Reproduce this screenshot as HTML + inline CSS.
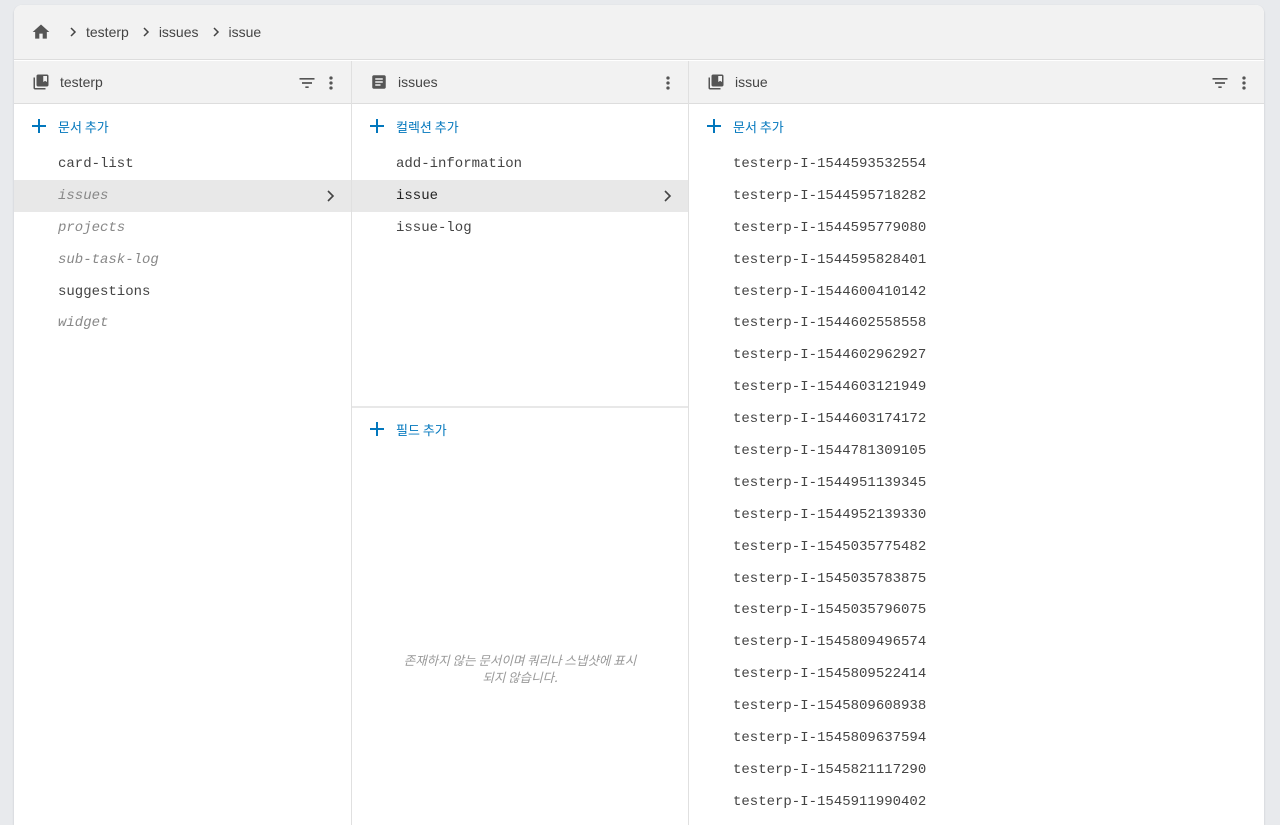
<!DOCTYPE html>
<html><head><meta charset="utf-8"><style>
*{box-sizing:border-box;margin:0;padding:0}
body{width:1280px;height:813px;background:#e8eaed;font-family:"Liberation Sans","Noto Sans CJK KR",sans-serif;overflow:hidden;position:relative}
.card{position:absolute;left:14px;top:5px;width:1250px;height:820px;background:#fff;border-radius:8px 8px 0 0;overflow:hidden;box-shadow:0 1px 2px rgba(0,0,0,.15)}
.bc{height:55px;background:#f2f2f2;border-bottom:1px solid #ddd;display:flex;align-items:center;padding-left:16px;font-size:14px;color:#444}
.bc .sep{margin:0 8px 0 12px;display:inline-block}
.col{position:absolute;top:56px;bottom:0;border-right:1px solid #e0e0e0}
.ch{height:43px;background:#f2f2f2;border-bottom:1px solid #ddd;display:flex;align-items:center;padding-left:18px;font-size:14px;color:#444;position:relative}
.ch .t{margin-left:10px}
.ic{position:absolute;top:12px}
.add{height:44px;display:flex;align-items:center;padding-left:18px;color:#0277bd;font-size:13px;font-family:"Noto Sans CJK KR",sans-serif}
.add svg{margin-right:12px}
.row{height:31.9px;line-height:31.9px;padding-left:44px;font-family:"Liberation Mono",monospace;font-size:14px;color:#444;position:relative}
.row span.x{position:relative;top:1px}
.row.i{font-style:italic;color:#888}
.row.sel{background:#e8e8e8}
.row.b{color:#222}
.row .ar{position:absolute;right:14px;top:9px}
</style></head><body>
<div class="card">
<div class="bc">
<svg width="22" height="20" viewBox="0 0 24 24"><path d="M10 20v-6h4v6h5v-8h3L12 3 2 12h3v8z" fill="#555"/></svg>
<svg class="sep" style="margin-left:16px" width="10" height="12" viewBox="0 0 10 12"><path d="M3 2l4 4-4 4" stroke="#444" stroke-width="1.5" fill="none"/></svg>testerp<svg class="sep" width="10" height="12" viewBox="0 0 10 12"><path d="M3 2l4 4-4 4" stroke="#444" stroke-width="1.5" fill="none"/></svg>issues<svg class="sep" width="10" height="12" viewBox="0 0 10 12"><path d="M3 2l4 4-4 4" stroke="#444" stroke-width="1.5" fill="none"/></svg>issue</div>

<div class="col" style="left:0;width:338px">
<div class="ch"><svg width="18" height="18" viewBox="0 0 24 24"><path d="M4 6H2v14c0 1.1.9 2 2 2h14v-2H4V6zm16-4H8c-1.1 0-2 .9-2 2v12c0 1.1.9 2 2 2h12c1.1 0 2-.9 2-2V4c0-1.1-.9-2-2-2zm0 10l-2.5-1.5L15 12V4h5v8z" fill="#555"/></svg><span class="t">testerp</span>
<svg class="ic" style="right:34px" width="20" height="20" viewBox="0 0 24 24"><path d="M10 18h4v-2h-4v2zM3 6v2h18V6H3zm3 7h12v-2H6v2z" fill="#555"/></svg>
<svg class="ic" style="right:10px" width="20" height="20" viewBox="0 0 24 24"><path d="M12 8a2 2 0 100-4 2 2 0 000 4zm0 2a2 2 0 100 4 2 2 0 000-4zm0 6a2 2 0 100 4 2 2 0 000-4z" fill="#555"/></svg></div>
<div class="add"><svg width="14" height="14" viewBox="0 0 14 14"><path d="M7 0v14M0 7h14" stroke="#0277bd" stroke-width="2"/></svg>문서 추가</div>
<div class="row"><span class="x">card-list</span></div>
<div class="row i sel"><span class="x">issues</span><svg class="ar" width="12" height="14" viewBox="0 0 12 14"><path d="M3 2l5 5-5 5" stroke="#444" stroke-width="1.6" fill="none"/></svg></div>
<div class="row i"><span class="x">projects</span></div>
<div class="row i"><span class="x">sub-task-log</span></div>
<div class="row"><span class="x">suggestions</span></div>
<div class="row i"><span class="x">widget</span></div>
</div>

<div class="col" style="left:338px;width:337px">
<div class="ch"><svg width="18" height="18" viewBox="0 0 24 24"><path d="M19 3H5c-1.1 0-2 .9-2 2v14c0 1.1.9 2 2 2h14c1.1 0 2-.9 2-2V5c0-1.1-.9-2-2-2zm-5 14H7v-2h7v2zm3-4H7v-2h10v2zm0-4H7V7h10v2z" fill="#555"/></svg><span class="t">issues</span>
<svg class="ic" style="right:10px" width="20" height="20" viewBox="0 0 24 24"><path d="M12 8a2 2 0 100-4 2 2 0 000 4zm0 2a2 2 0 100 4 2 2 0 000-4zm0 6a2 2 0 100 4 2 2 0 000-4z" fill="#555"/></svg></div>
<div class="add"><svg width="14" height="14" viewBox="0 0 14 14"><path d="M7 0v14M0 7h14" stroke="#0277bd" stroke-width="2"/></svg>컬렉션 추가</div>
<div class="row"><span class="x">add-information</span></div>
<div class="row b sel"><span class="x">issue</span><svg class="ar" width="12" height="14" viewBox="0 0 12 14"><path d="M3 2l5 5-5 5" stroke="#444" stroke-width="1.6" fill="none"/></svg></div>
<div class="row"><span class="x">issue-log</span></div>
<div style="position:absolute;top:345px;left:0;right:0;border-top:2px solid #e8e8e8">
<div class="add" style="height:42px"><svg width="14" height="14" viewBox="0 0 14 14"><path d="M7 0v14M0 7h14" stroke="#0277bd" stroke-width="2"/></svg>필드 추가</div>
<div style="position:absolute;top:243px;left:0;right:0;text-align:center;font-size:12.5px;font-style:italic;color:#999;line-height:17px;font-family:'Noto Sans CJK KR',sans-serif">존재하지 않는 문서이며 쿼리나 스냅샷에 표시<br>되지 않습니다.</div>
</div>
</div>

<div class="col" style="left:675px;width:575px;border-right:none">
<div class="ch"><svg width="18" height="18" viewBox="0 0 24 24"><path d="M4 6H2v14c0 1.1.9 2 2 2h14v-2H4V6zm16-4H8c-1.1 0-2 .9-2 2v12c0 1.1.9 2 2 2h12c1.1 0 2-.9 2-2V4c0-1.1-.9-2-2-2zm0 10l-2.5-1.5L15 12V4h5v8z" fill="#555"/></svg><span class="t">issue</span>
<svg class="ic" style="right:34px" width="20" height="20" viewBox="0 0 24 24"><path d="M10 18h4v-2h-4v2zM3 6v2h18V6H3zm3 7h12v-2H6v2z" fill="#555"/></svg>
<svg class="ic" style="right:10px" width="20" height="20" viewBox="0 0 24 24"><path d="M12 8a2 2 0 100-4 2 2 0 000 4zm0 2a2 2 0 100 4 2 2 0 000-4zm0 6a2 2 0 100 4 2 2 0 000-4z" fill="#555"/></svg></div>
<div class="add"><svg width="14" height="14" viewBox="0 0 14 14"><path d="M7 0v14M0 7h14" stroke="#0277bd" stroke-width="2"/></svg>문서 추가</div>
<div class="row"><span class="x">testerp-I-1544593532554</span></div>
<div class="row"><span class="x">testerp-I-1544595718282</span></div>
<div class="row"><span class="x">testerp-I-1544595779080</span></div>
<div class="row"><span class="x">testerp-I-1544595828401</span></div>
<div class="row"><span class="x">testerp-I-1544600410142</span></div>
<div class="row"><span class="x">testerp-I-1544602558558</span></div>
<div class="row"><span class="x">testerp-I-1544602962927</span></div>
<div class="row"><span class="x">testerp-I-1544603121949</span></div>
<div class="row"><span class="x">testerp-I-1544603174172</span></div>
<div class="row"><span class="x">testerp-I-1544781309105</span></div>
<div class="row"><span class="x">testerp-I-1544951139345</span></div>
<div class="row"><span class="x">testerp-I-1544952139330</span></div>
<div class="row"><span class="x">testerp-I-1545035775482</span></div>
<div class="row"><span class="x">testerp-I-1545035783875</span></div>
<div class="row"><span class="x">testerp-I-1545035796075</span></div>
<div class="row"><span class="x">testerp-I-1545809496574</span></div>
<div class="row"><span class="x">testerp-I-1545809522414</span></div>
<div class="row"><span class="x">testerp-I-1545809608938</span></div>
<div class="row"><span class="x">testerp-I-1545809637594</span></div>
<div class="row"><span class="x">testerp-I-1545821117290</span></div>
<div class="row"><span class="x">testerp-I-1545911990402</span></div>
</div>
</div>
</body></html>
